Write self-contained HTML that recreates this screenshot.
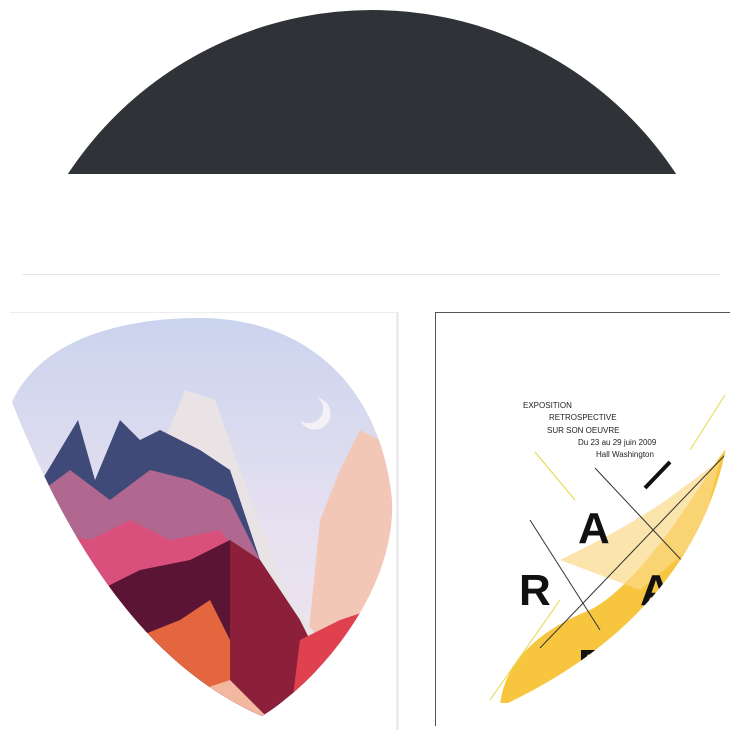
<!DOCTYPE html>
<html><head><meta charset="utf-8"><style>
html,body{margin:0;padding:0;background:#fff;width:738px;height:739px;overflow:hidden;font-family:"Liberation Sans",sans-serif}
</style></head><body>
<svg width="738" height="739" viewBox="0 0 738 739" style="position:absolute;left:0;top:0">
<defs>
<clipPath id="top"><rect x="0" y="0" width="738" height="174"/></clipPath>
<linearGradient id="sky" x1="0" y1="0" x2="0" y2="1"><stop offset="0" stop-color="#c9d3ee"/><stop offset=".5" stop-color="#e6e0f0"/><stop offset="1" stop-color="#f1e6ee"/></linearGradient>
<clipPath id="drop"><path d="M12 402 C40 340 120 318 200 318 C300 318 380 380 392 500 C396 590 320 680 262 716 C180 680 90 600 12 402 Z"/></clipPath>
<clipPath id="vis"><path d="M436 313 L730 313 L730 420 C720 520 660 630 508 703 L436 703 Z"/></clipPath>
</defs>
<circle cx="372" cy="374" r="364" fill="#2f3236" clip-path="url(#top)"/>
<line x1="22" y1="274.5" x2="720" y2="274.5" stroke="#e6e6e6" stroke-width="1"/>
<line x1="10" y1="312.5" x2="397" y2="312.5" stroke="#ededed"/>
<line x1="397.5" y1="312" x2="397.5" y2="730" stroke="#e6e6e6" stroke-width="2"/>
<line x1="435" y1="312.5" x2="730" y2="312.5" stroke="#555"/>
<line x1="435.5" y1="312" x2="435.5" y2="726" stroke="#555"/>
<g clip-path="url(#drop)">
<rect x="0" y="310" width="400" height="420" fill="url(#sky)"/>
<path d="M300 420 a16 16 0 1 0 18 -22 a12 12 0 1 1 -18 22z" fill="#f4f1f6"/>
<path d="M340 470 L360 430 L380 440 L400 520 L400 720 L300 720 L320 520Z" fill="#f3c7b8"/>
<path d="M165 440 L185 390 L215 400 L240 470 L290 600 L320 640 L340 620 L400 610 L400 720 L150 720Z" fill="#e9e3e6"/>
<path d="M30 500 L60 450 L78 420 L95 480 L120 420 L140 440 L160 430 L200 450 L230 470 L260 560 L300 620 L280 720 L0 720 L0 520Z" fill="#3f4a78"/>
<path d="M30 500 L70 470 L110 500 L150 470 L190 480 L230 500 L260 560 L290 640 L250 720 L0 720 L0 520Z" fill="#b06890"/>
<path d="M40 530 L90 540 L130 520 L170 540 L220 530 L250 570 L280 640 L250 720 L20 720Z" fill="#d9507c"/>
<path d="M60 580 L100 590 L140 570 L190 560 L230 540 L260 570 L290 640 L260 720 L60 720Z" fill="#5c1434"/>
<path d="M130 640 L180 620 L210 600 L240 660 L280 720 L120 720Z" fill="#e3663e"/>
<path d="M230 540 L260 560 L300 620 L320 660 L300 720 L230 720Z" fill="#8c1f3a"/>
<path d="M300 640 L340 620 L400 600 L400 720 L290 720Z" fill="#e0414f"/>
<path d="M200 690 L230 680 L270 720 L190 720Z" fill="#f3b9a0"/>
</g>
<g font-family="Liberation Sans,sans-serif" fill="#222">
<text x="523" y="408" font-size="8">EXPOSITION</text>
<text x="549" y="420" font-size="8">RETROSPECTIVE</text>
<text x="547" y="433" font-size="8">SUR SON OEUVRE</text>
<text x="578" y="445" font-size="8">Du 23 au 29 juin 2009</text>
<text x="596" y="457" font-size="8">Hall Washington</text>
</g>
<g clip-path="url(#vis)">
<path d="M500 705 C505 660 540 630 590 610 C630 590 680 520 710 470 L740 430 L740 720 Z" fill="#f7bf2a" opacity=".9"/>
<path d="M560 560 C600 540 640 520 680 490 L720 460 L700 540 L640 590Z" fill="#fbd88a" opacity=".7"/>
<line x1="535" y1="452" x2="575" y2="500" stroke="#e6d840"/>
<line x1="725" y1="395" x2="690" y2="450" stroke="#e6d840"/>
<line x1="490" y1="700" x2="560" y2="600" stroke="#e6d840"/>
<line x1="595" y1="468" x2="700" y2="580" stroke="#333"/>
<line x1="530" y1="520" x2="600" y2="630" stroke="#333"/>
<line x1="725" y1="455" x2="540" y2="648" stroke="#333"/>
<line x1="645" y1="488" x2="670" y2="462" stroke="#111" stroke-width="4"/>
<g font-family="Liberation Sans,sans-serif" font-weight="bold" font-size="44" fill="#111">
<text x="578" y="543">A</text>
<text x="519" y="605">R</text>
<text x="640" y="605">A</text>
<text x="578" y="680">B</text>
</g>
</g>
</svg>
</body></html>
